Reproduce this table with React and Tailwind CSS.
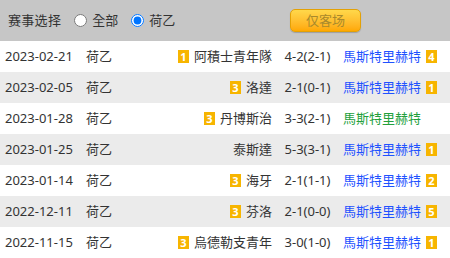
import React from 'react'

const rows = [
  { date: '2023-02-21', home: '阿積士青年隊', hr: 1, score: '4-2(2-1)', away: '馬斯特里赫特', ar: 4, win: false },
  { date: '2023-02-05', home: '洛達', hr: 3, score: '2-1(0-1)', away: '馬斯特里赫特', ar: 1, win: false },
  { date: '2023-01-28', home: '丹博斯治', hr: 3, score: '3-3(2-1)', away: '馬斯特里赫特', ar: null, win: true },
  { date: '2023-01-25', home: '泰斯達', hr: null, score: '5-3(3-1)', away: '馬斯特里赫特', ar: 1, win: false },
  { date: '2023-01-14', home: '海牙', hr: 3, score: '2-1(1-1)', away: '馬斯特里赫特', ar: 2, win: false },
  { date: '2022-12-11', home: '芬洛', hr: 3, score: '2-1(0-0)', away: '馬斯特里赫特', ar: 5, win: false },
  { date: '2022-11-15', home: '烏德勒支青年', hr: 3, score: '3-0(1-0)', away: '馬斯特里赫特', ar: 1, win: false },
]

function Rank({ n }){
  return (
    <span className="inline-block w-[11px] h-[13px] bg-[#f7b500] text-white text-[11px] font-bold leading-[13px] text-center">{n}</span>
  )
}

export default function App(){
  return (
    <div className="w-[450px] h-[258px] overflow-hidden bg-white text-[13px] text-[#333]" style={{ fontFamily: '"Noto Sans", "Noto Sans CJK TC", sans-serif' }}>
      <div className="h-[41px] bg-[#c6c6c6] flex items-center pl-[8px]">
        <span className="tracking-[0.3px]">赛事选择</span>
        <label className="flex items-center ml-[13px] gap-[5px]">
          <input type="radio" name="m" className="m-0 w-[13px] h-[13px]" />
          <span>全部</span>
        </label>
        <label className="flex items-center ml-[13px] gap-[5px]">
          <input type="radio" name="m" defaultChecked className="m-0 w-[13px] h-[13px]" />
          <span>荷乙</span>
        </label>
        <button className="ml-auto mr-[89px] w-[71px] h-[23px] rounded-[5px] border border-[#e3a106] bg-gradient-to-b from-[#ffd84a] to-[#ffa800] text-[#a98a2c] text-[13px] shadow-[0_1px_1px_rgba(0,0,0,0.2)]">仅客场</button>
      </div>
      {rows.map((r, i) => (
        <div key={i} className={`h-[31px] flex items-center ${i % 2 ? 'bg-[#ebebeb]' : 'bg-white'}`}>
          <div className="w-[86px] pl-[5px]">{r.date}</div>
          <div className="w-[40px]">荷乙</div>
          <div className="w-[146px] flex justify-end items-center gap-[5px]">
            {r.hr && <Rank n={r.hr} />}
            <span>{r.home}</span>
          </div>
          <div className="w-[71px] text-center">{r.score}</div>
          <div className="flex items-center gap-[5px]">
            <span className={r.win ? 'text-[#23a03c]' : 'text-[#1f52ff]'}>{r.away}</span>
            {r.ar && <Rank n={r.ar} />}
          </div>
        </div>
      ))}
    </div>
  )
}
